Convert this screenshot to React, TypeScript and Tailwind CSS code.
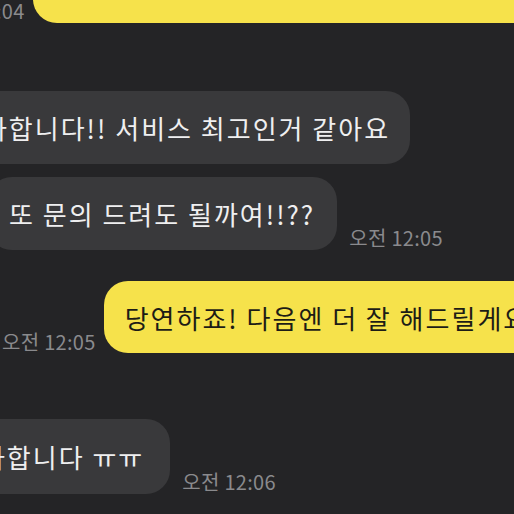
export default function App() {
  const font = { fontFamily: '"Noto Sans CJK KR", "Noto Sans", sans-serif' };

  return (
    <div
      className="w-[514px] h-[514px] overflow-hidden bg-[#242426] flex flex-col"
      style={font}
    >
      {/* my earlier message, mostly cut off at top */}
      <div className="flex items-end gap-[8px] -mt-[50px] -ml-[69px]">
        <span className="text-[20px] tracking-[0.3px] leading-none text-[#8a8a8d] mb-[2px] whitespace-nowrap">오전 12:04</span>
        <div className="h-[73px] w-[600px] shrink-0 rounded-[24px] bg-[#f6e24b]" />
      </div>

      {/* their first message */}
      <div className="flex items-end mt-[68px]">
        <div className="h-[73px] -ml-[64px] shrink-0 rounded-[24px] bg-[#39393b] pl-[21px] pr-[20px] flex items-center">
          <span className="text-[26px] tracking-[2px] text-[#efeff0] whitespace-nowrap">감사합니다!! 서비스 최고인거 같아요</span>
        </div>
      </div>

      {/* their second message */}
      <div className="flex items-end gap-[12px] mt-[13px]">
        <div className="h-[73px] -ml-[12px] shrink-0 rounded-[24px] bg-[#39393b] pl-[21px] pr-[22px] flex items-center">
          <span className="text-[26px] tracking-[2px] text-[#efeff0] whitespace-nowrap">또 문의 드려도 될까여!!??</span>
        </div>
        <span className="text-[20px] tracking-[0.3px] leading-none text-[#8a8a8d] mb-[2px] whitespace-nowrap">오전 12:05</span>
      </div>

      {/* my reply */}
      <div className="flex items-end gap-[8px] mt-[31px] pl-[2px]">
        <span className="text-[20px] tracking-[0.3px] leading-none text-[#8a8a8d] mb-[1px] whitespace-nowrap">오전 12:05</span>
        <div className="h-[72px] shrink-0 rounded-[24px] bg-[#f6e24b] pl-[21px] pr-[19px] flex items-center">
          <span className="text-[26px] tracking-[2px] text-[#1d1c16] whitespace-nowrap">당연하죠! 다음엔 더 잘 해드릴게요</span>
        </div>
      </div>

      {/* their last message */}
      <div className="flex items-end gap-[12px] mt-[66px]">
        <div className="h-[75px] -ml-[66px] shrink-0 rounded-[24px] bg-[#39393b] pl-[21px] pr-[26px] flex items-center">
          <span className="text-[26px] tracking-[2px] text-[#efeff0] whitespace-nowrap">감사합니다 ㅠㅠ</span>
        </div>
        <span className="text-[20px] tracking-[0.3px] leading-none text-[#8a8a8d] mb-[2px] whitespace-nowrap">오전 12:06</span>
      </div>
    </div>
  );
}
